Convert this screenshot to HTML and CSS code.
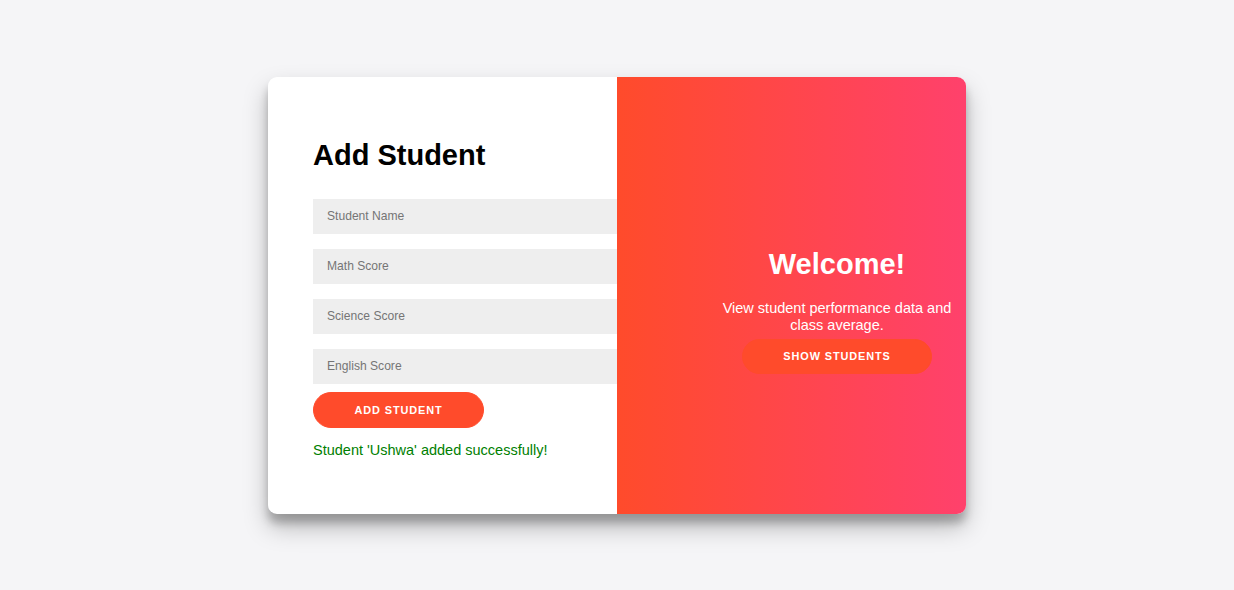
FILE: index.html
```html
<!DOCTYPE html>
<html lang="en">
<head>
<meta charset="utf-8">
<title>Add Student</title>
<link rel="stylesheet" href="styles.css">
</head>
<body>
<div class="card">
  <form class="form-panel">
    <h1 class="title">Add Student</h1>
    <input class="field" type="text" placeholder="Student Name">
    <input class="field" type="text" placeholder="Math Score">
    <input class="field" type="text" placeholder="Science Score">
    <input class="field" type="text" placeholder="English Score">
    <button type="button" class="btn btn-add">ADD STUDENT</button>
    <p class="message">Student 'Ushwa' added successfully!</p>
  </form>
  <div class="overlay-panel">
    <h1 class="welcome">Welcome!</h1>
    <p class="lead">View student performance data and class average.</p>
    <button type="button" class="btn btn-show">SHOW STUDENTS</button>
  </div>
</div>
</body>
</html>
```
FILE: styles.css
```css
* { box-sizing: border-box; }
html, body { margin: 0; height: 100%; }
body {
  background: #f5f5f7;
  font-family: "Liberation Sans", Arial, sans-serif;
  display: flex;
  align-items: center;
  justify-content: center;
}
.card {
  width: 698px;
  height: 437px;
  background: #fff;
  border-radius: 9px;
  box-shadow: 0 13px 25px rgba(0,0,0,0.25), 0 9px 9px rgba(0,0,0,0.22);
  display: flex;
  overflow: hidden;
}
.form-panel {
  width: 349px;
  flex: none;
  padding: 5px 0 0 45px;
  display: flex;
  flex-direction: column;
  justify-content: center;
  align-items: flex-start;
  overflow: hidden;
}
.title {
  margin: 2px 0 27px;
  font-size: 29px;
  font-weight: bold;
  color: #000;
  line-height: 33px;
}
.field {
  width: 100%;
  height: 35px;
  border: none;
  background: #eee;
  padding: 0 14px;
  font-family: "Liberation Sans", Arial, sans-serif;
  font-size: 12.1px;
  margin: 0 0 15px;
  outline: none;
}
.field::placeholder { color: #757575; }
.field:last-of-type { margin-bottom: 8px; }
.btn {
  border: 1px solid #ff4b2b;
  background: #ff4b2b;
  color: #fff;
  font-family: "Liberation Sans", Arial, sans-serif;
  font-weight: bold;
  font-size: 10.9px;
  border-radius: 18px;
  cursor: pointer;
  letter-spacing: 0.9px;
}
.btn-add {
  height: 36px;
  width: 171px;
  padding: 0;
}
.message {
  margin: 14px 0 0;
  color: #008000;
  font-size: 14.5px;
  line-height: 17px;
}
.overlay-panel {
  flex: 1;
  background: linear-gradient(to right, #ff4b2b, #ff416c);
  color: #fff;
  display: flex;
  flex-direction: column;
  align-items: center;
  justify-content: center;
  text-align: center;
  padding: 31px 8px 0 99px;
}
.welcome {
  margin: 0 0 19px;
  font-size: 29px;
  line-height: 33px;
  font-weight: bold;
}
.lead {
  margin: 0 0 5px;
  font-size: 14.5px;
  line-height: 17px;
}
.btn-show {
  height: 35px;
  width: 190px;
  padding: 0;
}
```
